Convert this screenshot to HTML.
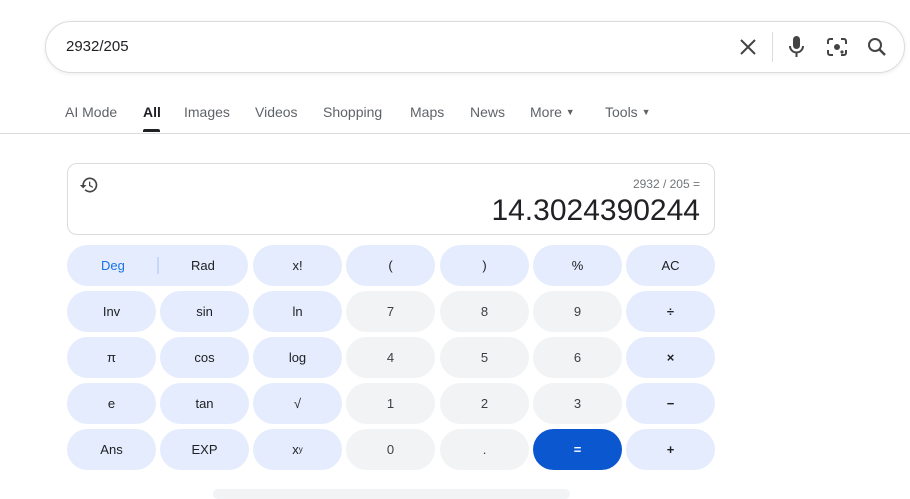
<!DOCTYPE html><html><head><style>
body{margin:0;width:910px;height:492px;overflow:hidden;background:#fff;font-family:"Liberation Sans",Arial,sans-serif;position:relative}
.sb{position:absolute;left:45px;top:21px;width:858px;height:50px;border:1px solid #dadce0;border-radius:26px;box-shadow:0 1px 4px rgba(0,0,0,.08)}
.q{position:absolute;left:66px;top:38px;font-size:15px;color:#202124}
.tabs{position:absolute;top:104px;font-size:14px;color:#5f6368}
.tabs span{position:absolute;white-space:nowrap}
.tabs small{font-size:9px;vertical-align:2px}
.line{position:absolute;left:0;top:133px;width:910px;height:1px;background:#dadce0}
.disp{position:absolute;left:67px;top:163px;width:646px;height:70px;border:1px solid #dadce0;border-radius:10px}
.b{position:absolute;height:41px;border-radius:21px;background:#e4ecfd;display:flex;align-items:center;justify-content:center;font-size:13px;color:#202124}
.g{background:#f1f3f4;color:#3c4043}
</style></head><body>
<div class="sb"></div>
<div class="q">2932/205</div>
<svg style="position:absolute;left:738px;top:37px" width="20" height="20" viewBox="0 0 20 20"><path d="M3 3L17 17M17 3L3 17" stroke="#444" stroke-width="2"/></svg>
<div style="position:absolute;left:772px;top:32px;width:1px;height:30px;background:#dadce0"></div>
<svg style="position:absolute;left:786px;top:35px" width="22" height="24" viewBox="0 0 22 24"><rect x="7" y="1" width="7" height="13" rx="3.5" fill="#444"/><path d="M4 11a6.5 6.5 0 0 0 13 0" stroke="#444" stroke-width="2" fill="none"/><path d="M10.5 17v5" stroke="#444" stroke-width="2"/></svg>
<svg style="position:absolute;left:826px;top:36px" width="22" height="22" viewBox="0 0 22 22"><path d="M2 8V5a2 2 0 0 1 2-2h3M15 3h3a2 2 0 0 1 2 2v3M20 14v3a2 2 0 0 1-2 2h-3M7 19H4a2 2 0 0 1-2-2v-3" stroke="#444" stroke-width="2" fill="none"/><circle cx="11" cy="11" r="3" fill="#444"/><circle cx="16" cy="16" r="1.6" fill="#444"/></svg>
<svg style="position:absolute;left:866px;top:36px" width="22" height="22" viewBox="0 0 22 22"><circle cx="9" cy="9" r="6" stroke="#444" stroke-width="2" fill="none"/><path d="M13.5 13.5L19 19" stroke="#444" stroke-width="2.4"/></svg>
<div class="tabs"><span style="left:65px">AI Mode</span><span style="left:143px;color:#202124;font-weight:bold">All</span><span style="left:184px">Images</span><span style="left:255px">Videos</span><span style="left:323px">Shopping</span><span style="left:410px">Maps</span><span style="left:470px">News</span><span style="left:530px">More <small>▼</small></span><span style="left:605px">Tools <small>▼</small></span></div>
<div style="position:absolute;left:143px;top:129px;width:17px;height:3px;background:#202124;border-radius:2px 2px 0 0"></div>
<div class="line"></div>
<div class="disp"></div>
<svg style="position:absolute;left:79px;top:175px" width="20" height="20" viewBox="0 0 24 24"><path d="M13 3a9 9 0 0 0-9 9H1l4 4 4-4H6a7 7 0 1 1 2.05 4.95l-1.42 1.42A9 9 0 1 0 13 3zm-1 5v5l4.25 2.52.77-1.28-3.52-2.09V8z" fill="#444"/></svg>
<div style="position:absolute;right:210px;top:177px;font-size:12px;color:#70757a">2932 / 205 =</div>
<div style="position:absolute;right:210px;top:194px;font-size:30px;color:#202124">14.3024390244</div>
<div class="b" style="left:67px;top:245px;width:181px"><span style="position:absolute;left:34px;color:#1a73e8;font-size:13px">Deg</span><span style="position:absolute;left:90px;top:12px;width:2px;height:17px;background:#c6d8fa"></span><span style="position:absolute;left:124px;font-size:13px">Rad</span></div>
<div id="k"></div>
<script>
var xs=[67,160,253,346,440,533,626],ys=[245,291,337,383,429];
var rows=[[null,null,"x!","(",")","%","AC"],["Inv","sin","ln","7","8","9","÷"],["π","cos","log","4","5","6","×"],["e","tan","√","1","2","3","−"],["Ans","EXP","x<sup style='font-size:8px'>y</sup>","0",".","=","+"]];
var h="";rows.forEach(function(r,i){r.forEach(function(t,j){if(t==null)return;var c="b";if(j>=3&&j<=5&&t!="%"&&t!="("&&t!=")")c+=" g";var st="left:"+xs[j]+"px;top:"+ys[i]+"px;width:89px;";if(t=="=")st+="background:#0b57d0;color:#fff;font-weight:bold;";if(j==6&&i>0)st+="font-weight:bold;";h+='<div class="'+c+'" style="'+st+'">'+t+'</div>';});});
document.getElementById("k").innerHTML=h;
</script>
<div style="position:absolute;left:213px;top:489px;width:357px;height:10px;background:#f1f3f4;border-radius:5px"></div>
</body></html>
